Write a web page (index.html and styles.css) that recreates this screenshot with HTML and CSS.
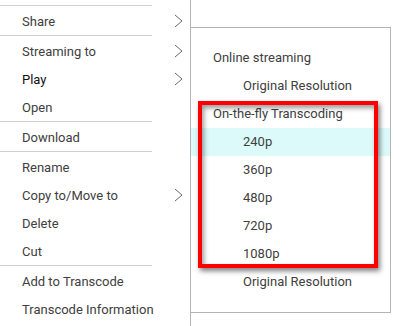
FILE: index.html
```html
<!DOCTYPE html>
<html lang="en">
<head>
    <meta charset="UTF-8">
    <title>Context Menu</title>
    <link rel="stylesheet" href="styles.css">
</head>
<body>
    <div class="menu">
        <div class="sep"></div>
        <div class="item">Share <svg class="chev" width="9" height="14" viewBox="0 0 9 14"><polyline points="1,1 8,7 1,13"/></svg></div>
        <div class="sep"></div>
        <div class="item">Streaming to <svg class="chev" width="9" height="14" viewBox="0 0 9 14"><polyline points="1,1 8,7 1,13"/></svg></div>
        <div class="item active">Play <svg class="chev" width="9" height="14" viewBox="0 0 9 14"><polyline points="1,1 8,7 1,13"/></svg></div>
        <div class="item">Open</div>
        <div class="sep"></div>
        <div class="item">Download</div>
        <div class="sep"></div>
        <div class="item">Rename</div>
        <div class="item">Copy to/Move to <svg class="chev" width="9" height="14" viewBox="0 0 9 14"><polyline points="1,1 8,7 1,13"/></svg></div>
        <div class="item">Delete</div>
        <div class="item">Cut</div>
        <div class="sep"></div>
        <div class="item">Add to Transcode</div>
        <div class="item">Transcode Information</div>
    </div>

    <div class="submenu">
        <div class="sub-item">Online streaming</div>
        <div class="sub-item nested">Original Resolution</div>
        <div class="sub-item">On-the-fly Transcoding</div>
        <div class="sub-item nested hover">240p</div>
        <div class="sub-item nested">360p</div>
        <div class="sub-item nested">480p</div>
        <div class="sub-item nested">720p</div>
        <div class="sub-item nested">1080p</div>
        <div class="sub-item nested">Original Resolution</div>
        <div class="highlight-box"></div>
    </div>
</body>
</html>
```

FILE: styles.css
```css
body {
    margin: 0;
    background: #fff;
    font-family: Roboto, "Liberation Sans", sans-serif;
    font-size: 13px;
    color: #404040;
    display: flex;
    align-items: flex-start;
    height: 326px;
    overflow: hidden;
}
.menu {
    width: 191px;
    height: 326px;
    padding-top: 5px;
    box-sizing: border-box;
    border-right: 1px solid #b4b4b4;
}
.sep {
    height: 1px;
    margin: 0 38px 1px 0;
    background: #d0d0d0;
}
.item {
    height: 28px;
    box-sizing: border-box;
    line-height: 26px;
    padding: 2px 7px 0 22px;
    display: flex;
    justify-content: space-between;
    align-items: center;
    white-space: nowrap;
}
.item.active {
    color: #111;
}
.chev {
    fill: none;
    stroke: #6a6a6a;
    stroke-width: 1;
    margin-top: -2px;
}
.submenu {
    position: relative;
    margin-top: 27px;
    width: 199px;
    padding: 16px 0;
    border: 1px solid #b4b4b4;
    border-left: none;
}
.sub-item {
    height: 28px;
    line-height: 28px;
    padding-left: 22px;
    white-space: nowrap;
}
.sub-item.nested {
    padding-left: 52px;
}
.sub-item.hover {
    background: #dcfafa;
}
.highlight-box {
    position: absolute;
    left: 7px;
    top: 73px;
    width: 172px;
    height: 159px;
    border: 4px solid #f00;
    box-shadow: 2px 3px 5px rgba(0, 0, 0, 0.5), inset 2px 3px 5px rgba(0, 0, 0, 0.4);
}
```
